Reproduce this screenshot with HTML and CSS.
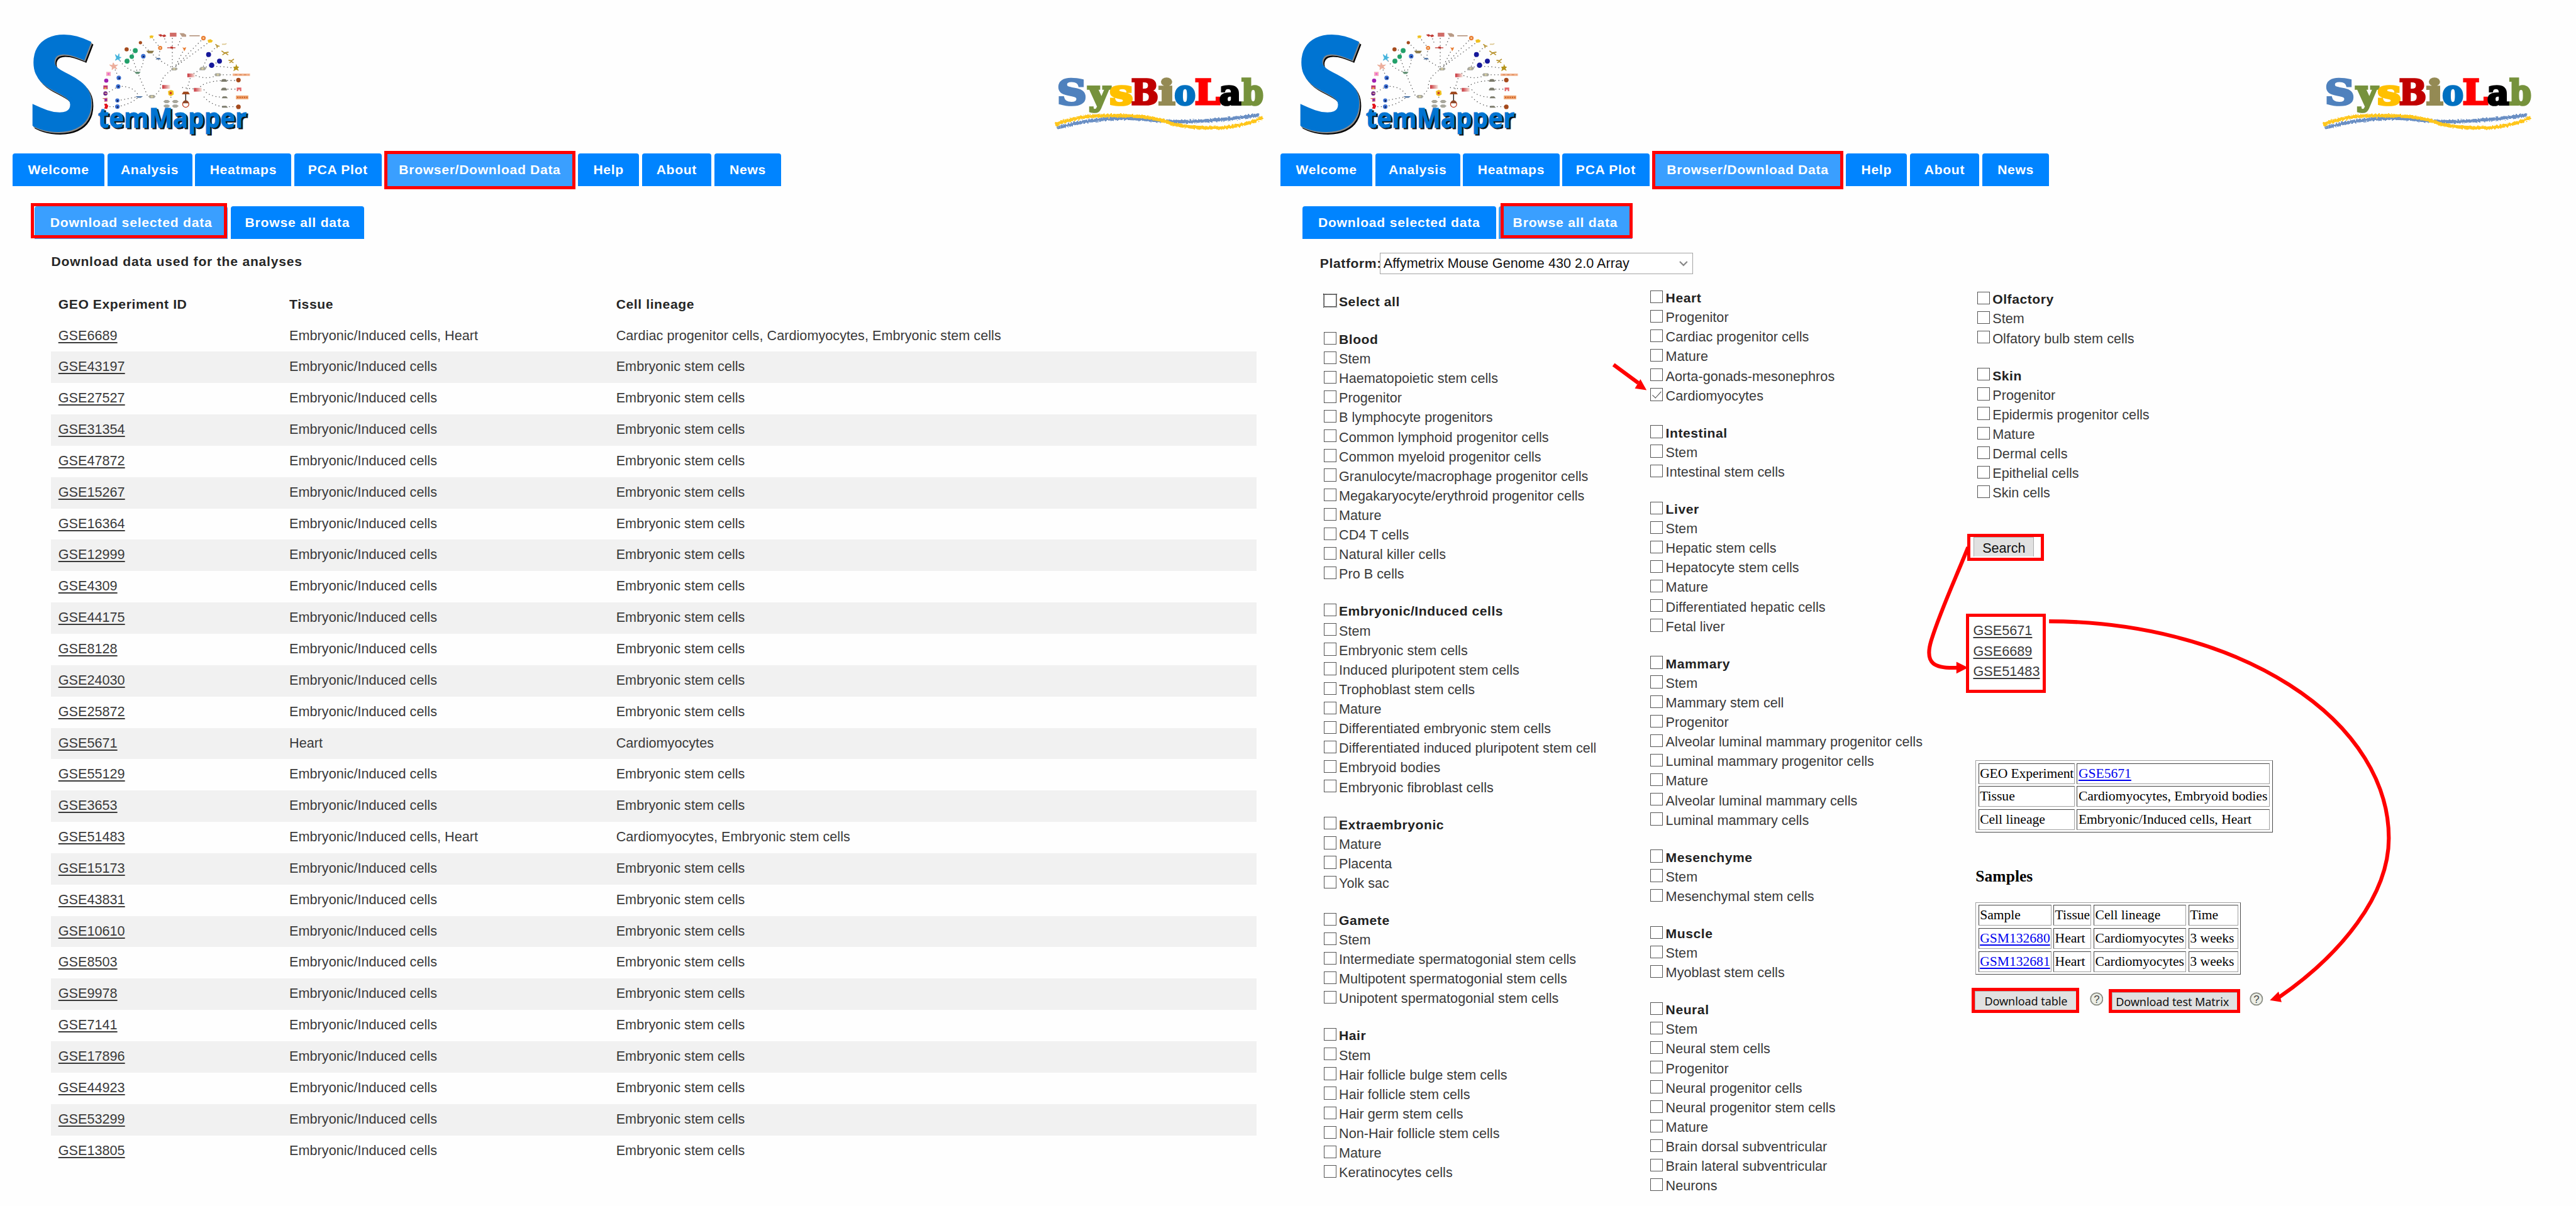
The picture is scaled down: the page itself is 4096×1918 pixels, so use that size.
FILE: index.html
```
<!DOCTYPE html>
<html lang="en">
<head>
<meta charset="utf-8">
<title>StemMapper</title>
<link rel="stylesheet" href="styles.css">
</head>
<body>
<svg class="defs" width="0" height="0">
  <defs>
    <filter id="chalk" x="-5%" y="-50%" width="110%" height="200%">
      <feTurbulence type="fractalNoise" baseFrequency="0.35" numOctaves="2" seed="4" result="n"/>
      <feDisplacementMap in="SourceGraphic" in2="n" scale="5"/>
    </filter>
    <linearGradient id="redfade"><stop offset="0" stop-color="#c8323a"/><stop offset="1" stop-color="#f6e4dc"/></linearGradient>
    <symbol id="stem-logo" viewBox="0 0 420 248">
      <g transform="translate(150 45) scale(.33333)">
        <g class="dots">
          <path d="M165 105L207 112M232 72L280 118L320 155L394 198M285 44L328 98L320 155M343 36L360 80M387 50V198M430 50L415 85M445 102L400 190M538 50L400 190M570 66L400 190M605 88L563 130L534 196M616 162L578 182L534 196L478 230L455 310M534 196C580 180 640 190 690 196"/>
          <path d="M125 145Q150 200 218 216M207 112L167 162M190 140L218 216M246 138Q250 190 218 216L266 330M102 188L127 243M394 198Q325 240 330 290Q320 320 287 334M124 285Q200 280 225 334M65 320L124 285M120 354L225 334M120 383Q190 370 225 334M500 232Q560 255 607 228L680 228M513 300Q530 260 638 256H708M540 300Q560 335 640 338M540 335Q580 380 640 383H708M638 298H700M435 290L513 300M380 318V350M65 383H120"/>
        </g>
        <path d="M452 322V356" stroke="#111" stroke-width="4"/>
        <g fill="#a54a1c"><circle cx="165" cy="105" r="10"/><circle cx="232" cy="72" r="8"/><circle cx="708" cy="254" r="11"/><circle cx="708" cy="384" r="11"/></g>
        <g fill="#22a06a"><circle cx="207" cy="111" r="12"/><circle cx="190" cy="140" r="11"/><circle cx="167" cy="162" r="12"/></g>
        <g fill="#3c6fd0"><circle cx="246" cy="138" r="11"/><circle cx="127" cy="243" r="11"/><circle cx="124" cy="285" r="11"/><circle cx="120" cy="353" r="10"/><circle cx="120" cy="383" r="11"/></g>
        <g fill="#16189a"><circle cx="563" cy="130" r="12"/><circle cx="616" cy="162" r="12"/><circle cx="578" cy="182" r="13"/></g>
        <g fill="#101c55"><circle cx="247" cy="140" r="4"/><circle cx="129" cy="245" r="4"/><circle cx="125" cy="286" r="4"/><circle cx="121" cy="355" r="4"/><circle cx="121" cy="385" r="4"/></g>
        <path d="M110 130L122 140L128 126L128 142L138 144L128 150L132 160L122 152L110 158L116 147Z" fill="#45b4dc" stroke="#45b4dc" stroke-width="3"/>
        <path d="M82 180L96 183L100 170L107 182L122 180L110 189L118 200L104 195L94 204L95 191Z" fill="#ecae9c" stroke="#ecae9c" stroke-width="3"/>
        <rect x="66" y="214" width="22" height="20" fill="#f7a8bd"/><circle cx="77" cy="224" r="5" fill="#e85fd0"/>
        <circle cx="66" cy="257" r="10" fill="#a01fb0"/>
        <rect x="52" y="280" width="21" height="18" fill="#c03a74"/><rect x="57" y="290" width="10" height="8" fill="#f2b54a"/>
        <circle cx="62" cy="319" r="10" fill="#6a1d85"/><path d="M54 316h16l-4 6z" fill="#f3c38a"/>
        <path d="M46 342L72 340L72 358L56 360L58 348Z" fill="#d5726a"/><circle cx="64" cy="350" r="6" fill="#8a1fae"/>
        <path d="M56 370L68 368L76 380L70 394L56 392L60 382Z" fill="#e3131a"/>
        <g fill="#f0c01f"><path d="M275 40l10-3 12 2-5 7 2 6-9-3-9 3 3-7z"/><path d="M558 60l14-5 12 8-6 8-16 2z"/><path d="M366 308l14-6 12 4 2 18-14 8-12-6z"/></g>
        <path d="M374 312h10v10h-10z" fill="#c9372c"/>
        <g fill="#c03b34"><path d="M318 34l14-3 6 5 12-4 8 8-12 6-8-6-8 4z"/><rect x="375" y="24" width="32" height="19" opacity=".75"/><rect x="362" y="95" width="40" height="4"/><rect x="378" y="91" width="12" height="10"/></g>
        <g fill="#b99a85"><path d="M422 26h20l12 8v10h-20z"/><path d="M470 36h50v5h-50z"/></g>
        <g fill="#e97d33"><circle cx="328" cy="98" r="10"/><circle cx="538" cy="50" r="11"/><path d="M436 94l8 4 10-4-3 10-6 10-4-10z"/></g>
        <g fill="#f6d6a8"><circle cx="328" cy="98" r="4"/><circle cx="538" cy="50" r="4"/></g>
        <g fill="#8c7a48"><path d="M260 112h38l-8 12h-20z"/><path d="M306 154h26l-6-8h-14z" fill="#5377a5"/><path d="M203 214h30l-8 10h-14z" fill="#5d8d70"/><path d="M208 332h36l-10 8h-16z" fill="#5377a5"/></g>
        <g fill="#a8a79c"><path d="M380 200l8-7h20l5 7-8 7h-20zM518 198l8-8h20l6 8-8 8h-20zM591 228l6-7h22l6 7-6 7h-22zM270 334l8-8h20l8 8-8 8h-20z"/><path d="M624 262h28v-6l-7-7h-14l-7 7zM624 304h28v-6l-7-7h-14l-7 7zM627 342h30l-8-9h-16zM627 388h30l-8-9h-16z" fill="#7c7b6c"/><path d="M343 358l9-7h14l10 7-10 8h-14zM385 358l9-7h14l10 7-10 8h-14zM343 380l9-7h14l10 7-10 8h-14zM385 380l9-7h14l10 7-10 8h-14z"/></g>
        <g fill="#d9cf9e"><circle cx="396" cy="200" r="5"/><circle cx="534" cy="198" r="5"/><circle cx="608" cy="228" r="5"/><circle cx="288" cy="334" r="5"/></g>
        <g fill="url(#redfade)"><rect x="460" y="222" width="36" height="18"/><rect x="492" y="292" width="38" height="18"/><rect x="338" y="278" width="38" height="18"/></g>
        <path d="M433 323l8-13h23l8 13z" fill="#a04a20"/>
        <circle cx="452" cy="371" r="15" fill="#fff" stroke="#c23a1c" stroke-width="4"/><path d="M437 367a15 15 0 0 1 30 0z" fill="#8e4628"/>
        <g fill="none" stroke="#b8922c" stroke-width="5"><path d="M596 80l10 8 10 2M604 98l2-14M626 112l14 10 20-4M630 132l14-10 14 10M660 158l14 2 12-8M664 170l10-6 10 6"/><path d="M628 80h16l6-4" stroke="#dcc892"/></g>
        <path d="M682 190l12-2 3-12 5 11 10 4-8 6 6 12-13-6-14 8 5-13z" fill="#b5941a"/>
        <path d="M680 228h84" stroke="#f3b48f" stroke-width="12"/><path d="M690 228h68" stroke="#d98250" stroke-width="4" stroke-dasharray="12 10"/>
        <path d="M700 290h22v18h-7v-8h-8v8h-7z" fill="#e2666a"/>
        <rect x="696" y="329" width="60" height="18" fill="#f0a26c"/><path d="M702 338h50" stroke="#c9632a" stroke-width="7" stroke-dasharray="6 5"/>
      </g>
      <text class="logo-s" x="50" y="212.5" textLength="106" lengthAdjust="spacingAndGlyphs" fill="#000" stroke="#000">S</text>
      <text class="logo-s" x="48" y="210.5" textLength="106" lengthAdjust="spacingAndGlyphs" fill="#888" stroke="#888">S</text>
      <text class="logo-s" x="46.5" y="209" textLength="106" lengthAdjust="spacingAndGlyphs" fill="#0074d2" stroke="#0074d2">S</text>
      <text class="logo-t" x="161" y="209" textLength="241" lengthAdjust="spacingAndGlyphs" fill="#111" stroke="#111">temMapper</text>
      <text class="logo-t" x="158.5" y="207" textLength="241" lengthAdjust="spacingAndGlyphs" fill="#0074d2" stroke="#0074d2">temMapper</text>
    </symbol>
    <symbol id="sys-logo" viewBox="1700 0 352.5 248">
      <g class="sys">
        <text x="1711" y="169" textLength="48" lengthAdjust="spacingAndGlyphs" fill="#4f81bd" stroke="#4f81bd">S</text>
        <text x="1762" y="169" textLength="34" lengthAdjust="spacingAndGlyphs" fill="#76923c" stroke="#76923c">y</text>
        <text x="1796" y="169" textLength="38" lengthAdjust="spacingAndGlyphs" fill="#ffc000" stroke="#ffc000">s</text>
        <text x="1831" y="169" textLength="44" lengthAdjust="spacingAndGlyphs" fill="#c00000" stroke="#c00000">B</text>
        <text x="1875" y="169" textLength="27" lengthAdjust="spacingAndGlyphs" fill="#948a54" stroke="#948a54">i</text>
        <text x="1901" y="169" textLength="34" lengthAdjust="spacingAndGlyphs" fill="#0070c0" stroke="#0070c0">o</text>
        <text x="1934" y="169" textLength="41" lengthAdjust="spacingAndGlyphs" fill="#ff0000" stroke="#ff0000">L</text>
        <text x="1974" y="169" textLength="35" lengthAdjust="spacingAndGlyphs" fill="#000" stroke="#000">a</text>
        <text x="2010" y="169" textLength="35" lengthAdjust="spacingAndGlyphs" fill="#76923c" stroke="#76923c">b</text>
      </g>
      <g fill="none" stroke-width="5.5" filter="url(#chalk)">
        <path d="M1711 207C1750 196 1780 192 1815 191.5S1880 198 1920 197S2000 192 2038 186" stroke="#6a8fc4"/>
        <path d="M1708 202C1735 191 1760 187 1800 187S1870 190 1890 198S1940 207 1965 207S2020 202 2044 190" stroke="#ffc61a"/>
      </g>
    </symbol>
  </defs>
</svg>
<div class="page">
  <section class="panel">
    <header class="top">
      <svg class="logo"><use href="#stem-logo"/></svg>
      <svg class="sys-logo"><use href="#sys-logo"/></svg>
    </header>
    <nav class="tabs main">
      <a class="t1">Welcome</a><a class="t2">Analysis</a><a class="t3">Heatmaps</a><a class="t4">PCA Plot</a><a class="t5 on">Browser/Download Data</a><a class="t6">Help</a><a class="t7">About</a><a class="t8">News</a>
    </nav>
    <nav class="tabs sub">
      <a class="s1 on">Download selected data</a><a class="s2">Browse all data</a>
    </nav>
    <h2 class="title">Download data used for the analyses</h2>
    <table class="geo">
      <thead><tr><th>GEO Experiment ID</th><th>Tissue</th><th>Cell lineage</th></tr></thead>
      <tbody>
        <tr><td><a>GSE6689</a></td><td>Embryonic/Induced cells, Heart</td><td>Cardiac progenitor cells, Cardiomyocytes, Embryonic stem cells</td></tr>
        <tr><td><a>GSE43197</a></td><td>Embryonic/Induced cells</td><td>Embryonic stem cells</td></tr>
        <tr><td><a>GSE27527</a></td><td>Embryonic/Induced cells</td><td>Embryonic stem cells</td></tr>
        <tr><td><a>GSE31354</a></td><td>Embryonic/Induced cells</td><td>Embryonic stem cells</td></tr>
        <tr><td><a>GSE47872</a></td><td>Embryonic/Induced cells</td><td>Embryonic stem cells</td></tr>
        <tr><td><a>GSE15267</a></td><td>Embryonic/Induced cells</td><td>Embryonic stem cells</td></tr>
        <tr><td><a>GSE16364</a></td><td>Embryonic/Induced cells</td><td>Embryonic stem cells</td></tr>
        <tr><td><a>GSE12999</a></td><td>Embryonic/Induced cells</td><td>Embryonic stem cells</td></tr>
        <tr><td><a>GSE4309</a></td><td>Embryonic/Induced cells</td><td>Embryonic stem cells</td></tr>
        <tr><td><a>GSE44175</a></td><td>Embryonic/Induced cells</td><td>Embryonic stem cells</td></tr>
        <tr><td><a>GSE8128</a></td><td>Embryonic/Induced cells</td><td>Embryonic stem cells</td></tr>
        <tr><td><a>GSE24030</a></td><td>Embryonic/Induced cells</td><td>Embryonic stem cells</td></tr>
        <tr><td><a>GSE25872</a></td><td>Embryonic/Induced cells</td><td>Embryonic stem cells</td></tr>
        <tr><td><a>GSE5671</a></td><td>Heart</td><td>Cardiomyocytes</td></tr>
        <tr><td><a>GSE55129</a></td><td>Embryonic/Induced cells</td><td>Embryonic stem cells</td></tr>
        <tr><td><a>GSE3653</a></td><td>Embryonic/Induced cells</td><td>Embryonic stem cells</td></tr>
        <tr><td><a>GSE51483</a></td><td>Embryonic/Induced cells, Heart</td><td>Cardiomyocytes, Embryonic stem cells</td></tr>
        <tr><td><a>GSE15173</a></td><td>Embryonic/Induced cells</td><td>Embryonic stem cells</td></tr>
        <tr><td><a>GSE43831</a></td><td>Embryonic/Induced cells</td><td>Embryonic stem cells</td></tr>
        <tr><td><a>GSE10610</a></td><td>Embryonic/Induced cells</td><td>Embryonic stem cells</td></tr>
        <tr><td><a>GSE8503</a></td><td>Embryonic/Induced cells</td><td>Embryonic stem cells</td></tr>
        <tr><td><a>GSE9978</a></td><td>Embryonic/Induced cells</td><td>Embryonic stem cells</td></tr>
        <tr><td><a>GSE7141</a></td><td>Embryonic/Induced cells</td><td>Embryonic stem cells</td></tr>
        <tr><td><a>GSE17896</a></td><td>Embryonic/Induced cells</td><td>Embryonic stem cells</td></tr>
        <tr><td><a>GSE44923</a></td><td>Embryonic/Induced cells</td><td>Embryonic stem cells</td></tr>
        <tr><td><a>GSE53299</a></td><td>Embryonic/Induced cells</td><td>Embryonic stem cells</td></tr>
        <tr><td><a>GSE13805</a></td><td>Embryonic/Induced cells</td><td>Embryonic stem cells</td></tr>
      </tbody>
    </table>
  </section>

  <section class="panel">
    <header class="top">
      <svg class="logo"><use href="#stem-logo"/></svg>
      <svg class="sys-logo"><use href="#sys-logo"/></svg>
    </header>
    <nav class="tabs main">
      <a class="t1">Welcome</a><a class="t2">Analysis</a><a class="t3">Heatmaps</a><a class="t4">PCA Plot</a><a class="t5 on">Browser/Download Data</a><a class="t6">Help</a><a class="t7">About</a><a class="t8">News</a>
    </nav>
    <nav class="tabs sub">
      <a class="s1">Download selected data</a><a class="s2 on">Browse all data</a>
    </nav>
    <div class="platform">
      <b>Platform:</b>
      <div class="select"><span>Affymetrix Mouse Genome 430 2.0 Array</span>
        <svg width="16" height="10" viewBox="0 0 16 10"><path d="M2 2l6 6 6-6" fill="none" stroke="#888" stroke-width="2.2"/></svg></div>
    </div>
    <div class="cols">
      <div class="col c1">
        <div class="grp all"><label class="h"><input type="checkbox" class="focus">Select all</label></div>
        <div class="grp"><label class="h"><input type="checkbox">Blood</label>
          <label><input type="checkbox">Stem</label>
          <label><input type="checkbox">Haematopoietic stem cells</label>
          <label><input type="checkbox">Progenitor</label>
          <label><input type="checkbox">B lymphocyte progenitors</label>
          <label><input type="checkbox">Common lymphoid progenitor cells</label>
          <label><input type="checkbox">Common myeloid progenitor cells</label>
          <label><input type="checkbox">Granulocyte/macrophage progenitor cells</label>
          <label><input type="checkbox">Megakaryocyte/erythroid progenitor cells</label>
          <label><input type="checkbox">Mature</label>
          <label><input type="checkbox">CD4 T cells</label>
          <label><input type="checkbox">Natural killer cells</label>
          <label><input type="checkbox">Pro B cells</label></div>
        <div class="grp"><label class="h"><input type="checkbox">Embryonic/Induced cells</label>
          <label><input type="checkbox">Stem</label>
          <label><input type="checkbox">Embryonic stem cells</label>
          <label><input type="checkbox">Induced pluripotent stem cells</label>
          <label><input type="checkbox">Trophoblast stem cells</label>
          <label><input type="checkbox">Mature</label>
          <label><input type="checkbox">Differentiated embryonic stem cells</label>
          <label><input type="checkbox">Differentiated induced pluripotent stem cells</label>
          <label><input type="checkbox">Embryoid bodies</label>
          <label><input type="checkbox">Embryonic fibroblast cells</label></div>
        <div class="grp"><label class="h"><input type="checkbox">Extraembryonic</label>
          <label><input type="checkbox">Mature</label>
          <label><input type="checkbox">Placenta</label>
          <label><input type="checkbox">Yolk sac</label></div>
        <div class="grp"><label class="h"><input type="checkbox">Gamete</label>
          <label><input type="checkbox">Stem</label>
          <label><input type="checkbox">Intermediate spermatogonial stem cells</label>
          <label><input type="checkbox">Multipotent spermatogonial stem cells</label>
          <label><input type="checkbox">Unipotent spermatogonial stem cells</label></div>
        <div class="grp"><label class="h"><input type="checkbox">Hair</label>
          <label><input type="checkbox">Stem</label>
          <label><input type="checkbox">Hair follicle bulge stem cells</label>
          <label><input type="checkbox">Hair follicle stem cells</label>
          <label><input type="checkbox">Hair germ stem cells</label>
          <label><input type="checkbox">Non-Hair follicle stem cells</label>
          <label><input type="checkbox">Mature</label>
          <label><input type="checkbox">Keratinocytes cells</label></div>
      </div>
      <div class="col c2">
        <div class="grp"><label class="h"><input type="checkbox">Heart</label>
          <label><input type="checkbox">Progenitor</label>
          <label><input type="checkbox">Cardiac progenitor cells</label>
          <label><input type="checkbox">Mature</label>
          <label><input type="checkbox">Aorta-gonads-mesonephros</label>
          <label><input type="checkbox" checked>Cardiomyocytes</label></div>
        <div class="grp"><label class="h"><input type="checkbox">Intestinal</label>
          <label><input type="checkbox">Stem</label>
          <label><input type="checkbox">Intestinal stem cells</label></div>
        <div class="grp"><label class="h"><input type="checkbox">Liver</label>
          <label><input type="checkbox">Stem</label>
          <label><input type="checkbox">Hepatic stem cells</label>
          <label><input type="checkbox">Hepatocyte stem cells</label>
          <label><input type="checkbox">Mature</label>
          <label><input type="checkbox">Differentiated hepatic cells</label>
          <label><input type="checkbox">Fetal liver</label></div>
        <div class="grp"><label class="h"><input type="checkbox">Mammary</label>
          <label><input type="checkbox">Stem</label>
          <label><input type="checkbox">Mammary stem cell</label>
          <label><input type="checkbox">Progenitor</label>
          <label><input type="checkbox">Alveolar luminal mammary progenitor cells</label>
          <label><input type="checkbox">Luminal mammary progenitor cells</label>
          <label><input type="checkbox">Mature</label>
          <label><input type="checkbox">Alveolar luminal mammary cells</label>
          <label><input type="checkbox">Luminal mammary cells</label></div>
        <div class="grp"><label class="h"><input type="checkbox">Mesenchyme</label>
          <label><input type="checkbox">Stem</label>
          <label><input type="checkbox">Mesenchymal stem cells</label></div>
        <div class="grp"><label class="h"><input type="checkbox">Muscle</label>
          <label><input type="checkbox">Stem</label>
          <label><input type="checkbox">Myoblast stem cells</label></div>
        <div class="grp"><label class="h"><input type="checkbox">Neural</label>
          <label><input type="checkbox">Stem</label>
          <label><input type="checkbox">Neural stem cells</label>
          <label><input type="checkbox">Progenitor</label>
          <label><input type="checkbox">Neural progenitor cells</label>
          <label><input type="checkbox">Neural progenitor stem cells</label>
          <label><input type="checkbox">Mature</label>
          <label><input type="checkbox">Brain dorsal subventricular</label>
          <label><input type="checkbox">Brain lateral subventricular</label>
          <label><input type="checkbox">Neurons</label></div>
      </div>
      <div class="col c3">
        <div class="grp"><label class="h"><input type="checkbox">Olfactory</label>
          <label><input type="checkbox">Stem</label>
          <label><input type="checkbox">Olfatory bulb stem cells</label></div>
        <div class="grp"><label class="h"><input type="checkbox">Skin</label>
          <label><input type="checkbox">Progenitor</label>
          <label><input type="checkbox">Epidermis progenitor cells</label>
          <label><input type="checkbox">Mature</label>
          <label><input type="checkbox">Dermal cells</label>
          <label><input type="checkbox">Epithelial cells</label>
          <label><input type="checkbox">Skin cells</label></div>
        <div class="mark search"><button>Search</button></div>
        <div class="mark hits"><a>GSE5671</a><a>GSE6689</a><a>GSE51483</a></div>
        <div class="info exp">
          <span>GEO Experiment</span><span><a>GSE5671</a></span>
          <span>Tissue</span><span>Cardiomyocytes, Embryoid bodies</span>
          <span>Cell lineage</span><span>Embryonic/Induced cells, Heart</span>
        </div>
        <h3>Samples</h3>
        <div class="info smp">
          <span>Sample</span><span>Tissue</span><span>Cell lineage</span><span>Time</span>
          <span><a>GSM132680</a></span><span>Heart</span><span>Cardiomyocytes</span><span>3 weeks</span>
          <span><a>GSM132681</a></span><span>Heart</span><span>Cardiomyocytes</span><span>3 weeks</span>
        </div>
        <div class="dl">
          <div class="mark d1"><button>Download table</button></div>
          <svg class="q q1" viewBox="0 0 22 22"><circle cx="11" cy="11" r="9.8"/><text x="11" y="17">?</text></svg>
          <div class="mark d2"><button>Download test Matrix</button></div>
          <svg class="q q2" viewBox="0 0 22 22"><circle cx="11" cy="11" r="9.8"/><text x="11" y="17">?</text></svg>
        </div>
      </div>
    </div>
  </section>

  <svg class="arrows" viewBox="0 0 4170 1953">
    <path d="M2612 590.5L2652 620M3186 886C3162 945 3140 992 3126 1038C3115 1075 3132 1083 3170 1081M3317 1006A550 351 0 0 1 3867 1357C3867 1450 3790 1545 3689 1615"/>
    <path class="head" d="M2655.5 614L2646.5 629L2665.5 631.7ZM3167 1071.5V1090.5L3186 1081ZM3688.5 1605.5L3693.5 1622.5L3674.5 1619.5Z"/>
  </svg>
</div>
</body>
</html>
```
FILE: styles.css
```
* { box-sizing: border-box; }
body { margin: 0; background: #fff; overflow: hidden; }
.defs { position: absolute; }
.page {
  zoom: 0.98225;
  position: relative;
  display: flex;
  width: 4170px;
  height: 1953px;
  overflow: hidden;
  background: #fefefe;
  color: #3a3a3a;
  font-family: "Liberation Sans", Arial, sans-serif;
  font-size: 22px;
  letter-spacing: .04px;
  white-space: nowrap;
}
.panel { flex: none; width: 2052.5px; }
.panel + .panel { width: 2117.5px; }

.top { display: flex; justify-content: space-between; width: 2052.5px; height: 248.3px; }
.logo { width: 420px; height: 248px; }
.sys-logo { width: 352.5px; height: 248px; }
.logo-s { font: bold 207px "Open Sans", sans-serif; stroke-width: 6; }
.logo-t { font: bold 43px "Open Sans", sans-serif; stroke-width: 1; }
.sys { font: bold 55px "DejaVu Serif", serif; stroke-width: 3.8; }
.dots { fill: none; stroke: #222; stroke-width: 4; stroke-dasharray: 4 13; opacity: .8; }

.tabs { display: flex; gap: 4.7px; height: 53.4px; }
.tabs a {
  position: relative;
  display: flex;
  align-items: center;
  justify-content: center;
  background: #0084ff;
  border-radius: 4px 4px 0 0;
  color: #fff;
  font-size: 21.5px;
  font-weight: bold;
  letter-spacing: .7px;
}
.tabs .on { background: #3a9fff; }
.tabs .on::after { content: ""; position: absolute; border: 6px solid #f00; }
.main { margin-left: 20.5px; }
.main .on::after { inset: -4.3px 0; }
.t1 { width: 148.5px; }
.t2 { width: 137.5px; }
.t3 { width: 156px; }
.t4 { width: 141px; }
.t5 { width: 309px; }
.t6 { width: 98.5px; }
.t7 { width: 112.5px; }
.t8 { width: 108.5px; }
.sub { margin: 32.3px 0 0 56px; }
.sub a { letter-spacing: .8px; }
.s1 { width: 313px; }
.s2 { width: 215.5px; }
.s1.on::after { inset: -5px 1px 1.5px -6px; }
.s2.on::after { inset: -5px -1px 1.5px 2.5px; }

.title {
  margin: 21.8px 0 0 83px;
  font-size: 21.5px;
  line-height: 28px;
  letter-spacing: .8px;
  color: #262626;
}
.geo { display: block; width: 1952px; margin: 30.9px 0 0 82.4px; }
.geo thead, .geo tbody { display: block; }
.geo tr { display: grid; grid-template-columns: 374px 529px 1fr; height: 50.76px; line-height: 48.6px; }
.geo th, .geo td { padding: 0 0 0 12px; text-align: left; }
.geo th { font-size: 21.5px; letter-spacing: .6px; color: #262626; }
.geo tbody tr:nth-child(even) { background: #f1f1f1; }
.geo a, .hits a { text-decoration: underline; text-decoration-thickness: 1.8px; text-underline-offset: 3px; }

.platform { display: flex; align-items: center; margin: 22px 0 0 84.3px; height: 34.6px; }
.platform b { width: 96.7px; font-size: 21.5px; letter-spacing: .6px; color: #262626; }
.select {
  display: flex;
  align-items: center;
  justify-content: space-between;
  width: 507px;
  height: 34.6px;
  padding: 0 6px 0 5px;
  border: 2px solid #a4a4a4;
  background: #fff;
  color: #111;
}

.cols { display: flex; margin: 20.5px 0 0 90.1px; }
.col { flex: none; }
.c1 { width: 440.4px; margin-right: 88.6px; padding-top: 6.4px; overflow: hidden; }
.c2 { width: 529px; }
.c3 { padding-top: 2.3px; }
.grp { margin-bottom: 28.4px; }
label { display: flex; align-items: center; height: 31.7px; padding-top: 4.6px; }
label.h { font-size: 21.5px; font-weight: bold; letter-spacing: .55px; color: #222; }
input {
  appearance: none;
  flex: none;
  width: 20.6px;
  height: 20.6px;
  margin: 0 4.3px 4.6px 0;
  border: 2px solid #555;
  background: #fff;
}
input.focus { outline: 2px dotted #222; }
.all { margin: 0 0 29px; }
.c1 { margin-left: -2px; padding-left: 2px; width: 442.4px; }
input:checked { display: grid; place-items: center; }
input:checked::after {
  content: "";
  width: 6px;
  height: 13px;
  margin-top: -4px;
  border: solid #444;
  border-width: 0 2px 2px 0;
  transform: rotate(42deg);
}

.mark { border: 6px solid #f00; background: #fff; }
button { display: block; padding: 0; border: 1.5px solid #adadad; background: #e1e1e1; color: #111; font: 22px "Liberation Sans", Arial, sans-serif; }
.search { width: 125px; height: 44px; margin: 52.3px 0 0 -16.5px; padding-left: 6px; }
.search button { width: 97.5px; height: 32px; border-bottom: 0; line-height: 34px; }
.hits { width: 130px; height: 128.5px; margin: 85.5px 0 0 -18.5px; padding: 6px 0 0 7px; }
.hits a { display: block; line-height: 33.3px; }

.info {
  display: grid;
  gap: 3.6px;
  margin-left: -2.5px;
  padding: 3.4px;
  border: 1.8px solid;
  border-color: #a0a0a0 #4a4a4a #4a4a4a #a0a0a0;
  background: #fff;
  color: #000;
  font-family: "Liberation Serif", "Times New Roman", serif;
  letter-spacing: 0;
}
.info span {
  display: flex;
  align-items: center;
  height: 33.6px;
  padding-left: 1.5px;
  border: 1.8px solid;
  border-color: #444 #a0a0a0 #a0a0a0 #444;
}
.info a { color: #00e; text-decoration: underline; text-decoration-thickness: 1.7px; text-underline-offset: 3px; }
.exp { width: 481px; margin-top: 109px; grid-template-columns: 156px 1fr; }
.exp span:first-child { letter-spacing: -.1px; }
.smp { width: 429.5px; grid-template-columns: 118px 61.5px 150px 1fr; }
h3 { margin: 55px 0 26px -2.5px; font: bold 26px/32px "Liberation Serif", "Times New Roman", serif; color: #000; }

.dl { display: flex; align-items: flex-start; margin: 22px 0 0 -8.5px; height: 42px; }
.dl button { width: 100%; height: 100%; font: 18.4px "Noto Sans", sans-serif; border-width: 1.5px 0 0 1.5px; letter-spacing: -.1px; }
.d1 { width: 174px; height: 40px; }
.d2 { width: 212px; height: 38px; margin-top: 2px; }
.dl .d2 button { padding-right: 8px; }
.q { width: 22px; height: 22px; }
.q1 { margin: 7px 9.5px 0 16.5px; }
.q2 { margin: 7px 0 0 16px; }
.q circle { fill: #eceee6; stroke: #8a8d84; stroke-width: 1.8; }
.q text { font: 17px "Liberation Sans", sans-serif; text-anchor: middle; fill: #444; }

.arrows { position: absolute; left: 0; top: 0; width: 4170px; height: 1953px; fill: none; stroke: #f00; stroke-width: 6.2; }
.arrows .head { fill: #f00; stroke: none; }
```
